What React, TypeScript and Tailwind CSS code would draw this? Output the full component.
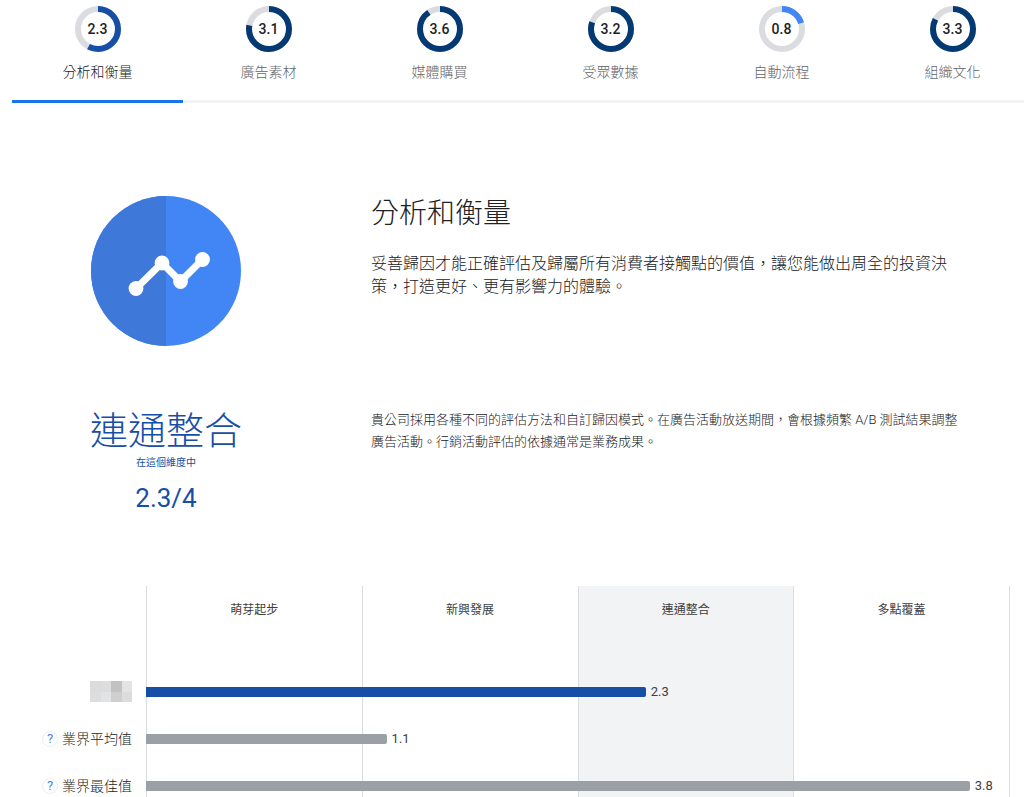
import { clsx } from 'clsx';

interface Dimension {
  name: string;
  score: number;
  color: string;
}

interface ResultRow {
  label?: string;
  value: number;
  own?: boolean;
}

const MAX_SCORE = 4;

const dimensions: Dimension[] = [
  { name: '分析和衡量', score: 2.3, color: '#174ea6' },
  { name: '廣告素材', score: 3.1, color: '#043973' },
  { name: '媒體購買', score: 3.6, color: '#043973' },
  { name: '受眾數據', score: 3.2, color: '#043973' },
  { name: '自動流程', score: 0.8, color: '#4285f4' },
  { name: '組織文化', score: 3.3, color: '#043973' },
];

const levels = ['萌芽起步', '新興發展', '連通整合', '多點覆蓋'];

const rows: ResultRow[] = [
  { value: 2.3, own: true },
  { label: '業界平均值', value: 1.1 },
  { label: '業界最佳值', value: 3.8 },
];

const maskColors = ['#dadbdd', '#dddddd', '#c4c2c0', '#e2e3e5', '#dddddd', '#e2e3e5', '#cfcfd0', '#dcdcdd'];

function ScoreRing({ score, color }: { score: number; color: string }) {
  const radius = 20;
  const length = 2 * Math.PI * radius;

  return (
    <span className="grid place-items-center">
      <svg width="46" height="46" viewBox="0 0 46 46" className="col-start-1 row-start-1" aria-hidden="true">
        <circle cx="23" cy="23" r={radius} fill="none" stroke="#dadce0" strokeWidth="6" />
        <circle
          cx="23"
          cy="23"
          r={radius}
          fill="none"
          stroke={color}
          strokeWidth="6"
          strokeDasharray={`${(score / MAX_SCORE) * length} ${length}`}
          transform="rotate(-90 23 23)"
        />
      </svg>
      <span className="col-start-1 row-start-1 text-sm leading-5 font-medium text-[#202124]">
        {score.toFixed(1)}
      </span>
    </span>
  );
}

function DimensionTabs() {
  return (
    <div className="overflow-hidden pl-3">
      <div role="tablist" className="-mr-[14px] flex">
        {dimensions.map((item, i) => (
          <button
            key={item.name}
            type="button"
            role="tab"
            aria-selected={i === 0}
            className={clsx(
              'flex flex-1 flex-col items-center gap-[10px] border-b-3 pt-[6px] pb-[18px]',
              i === 0 ? 'border-[#1a73e8] text-[#202124]' : 'border-[#f1f3f4] text-[#5f6368]'
            )}
          >
            <ScoreRing score={item.score} color={item.color} />
            <span className="text-sm leading-5">{item.name}</span>
          </button>
        ))}
      </div>
    </div>
  );
}

function AnalyticsIcon() {
  return (
    <svg width="150" height="150" viewBox="0 0 150 150" aria-hidden="true">
      <circle cx="75" cy="75" r="75" fill="#4285f4" />
      <path d="M75 0a75 75 0 0 0 0 150z" fill="#3e78d8" />
      <path d="M45 92.500 71 67 89.500 85.500 111.500 63.500" fill="none" stroke="#fff" strokeWidth="7" />
      <circle cx="45" cy="92.500" r="7.400" fill="#fff" />
      <circle cx="71" cy="67" r="7.400" fill="#fff" />
      <circle cx="89.500" cy="85.500" r="7.400" fill="#fff" />
      <circle cx="111.500" cy="63.500" r="7.400" fill="#fff" />
    </svg>
  );
}

function MaskedName() {
  return (
    <svg width="42" height="21" viewBox="0 0 42 21" shapeRendering="crispEdges" aria-hidden="true">
      {maskColors.map((color, i) => (
        <rect key={i} x={(i % 4) * 10.5} y={i < 4 ? 0 : 10.5} width="10.5" height="10.5" fill={color} />
      ))}
    </svg>
  );
}

function ResultChart() {
  return (
    <section className="mr-[14px] grid grid-cols-[146px_1fr]">
      <div className="col-start-2 row-start-1 grid grid-cols-4 border-r border-[#dadce0]">
        {levels.map((level, i) => (
          <div
            key={level}
            className={clsx(
              'border-l border-[#dadce0] pt-[14px] text-center text-xs leading-5 font-normal text-[#3c4043]',
              i === 2 && 'bg-[#f1f3f4]'
            )}
          >
            {level}
          </div>
        ))}
      </div>
      <div className="col-span-2 col-start-1 row-start-1 flex flex-col gap-[26px] pt-[95px] pb-px">
        {rows.map((row, i) => (
          <div key={i} className="grid grid-cols-[146px_1fr] items-center">
            <div className="flex h-[21px] items-center justify-end gap-1 pr-[14px]">
              {row.label ? (
                <>
                  <button
                    type="button"
                    aria-label={`${row.label}說明`}
                    className="flex size-4 items-center justify-center rounded-full border border-[#eceef0] text-[13px] font-normal text-[#4f7df0]"
                  >
                    ?
                  </button>
                  <span className="text-sm leading-5 text-[#202124]">{row.label}</span>
                </>
              ) : (
                <MaskedName />
              )}
            </div>
            <div className="flex items-center gap-[5px]">
              <div
                className={clsx('h-[10px] rounded-r-xs', row.own ? 'bg-[#174ea6]' : 'bg-[#9aa0a6]')}
                style={{ width: `calc(${(row.value / MAX_SCORE) * 100}% + 3px)` }}
              />
              <span className="text-[13px] leading-5 font-normal text-[#3c4043]">{row.value.toFixed(1)}</span>
            </div>
          </div>
        ))}
      </div>
    </section>
  );
}

export default function App() {
  return (
    <main lang="zh-Hant" className="bg-white font-[Roboto,'Noto_Sans_CJK_TC',sans-serif] font-light text-[#202124]">
      <DimensionTabs />

      <section className="mt-[93px] grid grid-cols-[332px_1fr] gap-x-[39px]">
        <div className="flex justify-center">
          <AnalyticsIcon />
        </div>
        <div>
          <h1 className="mt-[2px] text-[28px] leading-8">分析和衡量</h1>
          <p className="mt-[22px] max-w-[590px] text-base leading-[23px]">
            妥善歸因才能正確評估及歸屬所有消費者接觸點的價值，讓您能做出周全的投資決策，打造更好、更有影響力的體驗。
          </p>
        </div>
      </section>

      <section className="mt-[61px] mb-[72px] grid grid-cols-[332px_1fr] gap-x-[39px]">
        <div className="text-center text-[#174ea6]">
          <h2 className="text-[38px] leading-[48px]">連通整合</h2>
          <p className="text-[10px] leading-4 font-normal">在這個維度中</p>
          <p className="mt-[11px] text-[26px] leading-8 font-normal">2.3/4</p>
        </div>
        <p className="mt-[2px] max-w-[590px] text-[13px] leading-[22px]">
          貴公司採用各種不同的評估方法和自訂歸因模式。在廣告活動放送期間，會根據頻繁 A/B 測試結果調整廣告活動。行銷活動評估的依據通常是業務成果。
        </p>
      </section>

      <ResultChart />
    </main>
  );
}
